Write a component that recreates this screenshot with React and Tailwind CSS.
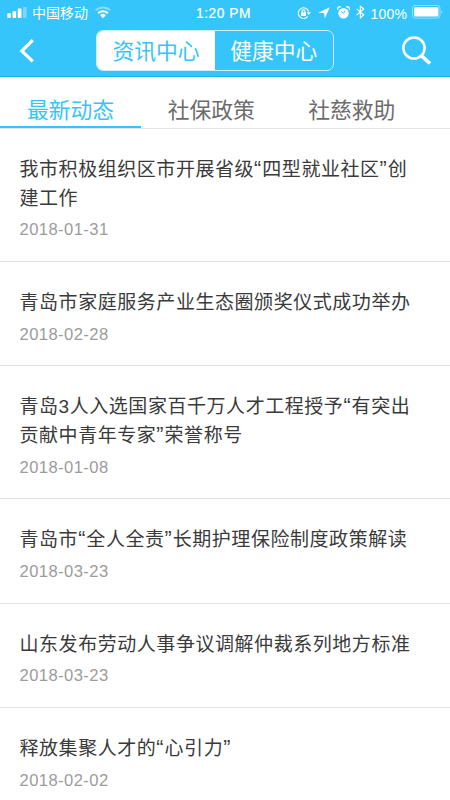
const articles = [
  { lines: ['我市积极组织区市开展省级“四型就业社区”创', '建工作'], date: '2018-01-31', height: 'h-[133px]' },
  { lines: ['青岛市家庭服务产业生态圈颁奖仪式成功举办'], date: '2018-02-28', height: 'h-[104.4px]' },
  { lines: ['青岛3人入选国家百千万人才工程授予“有突出', '贡献中青年专家”荣誉称号'], date: '2018-01-08', height: 'h-[133px]' },
  { lines: ['青岛市“全人全责”长期护理保险制度政策解读'], date: '2018-03-23', height: 'h-[104.4px]' },
  { lines: ['山东发布劳动人事争议调解仲裁系列地方标准'], date: '2018-03-23', height: 'h-[104.4px]' },
  { lines: ['释放集聚人才的“心引力”'], date: '2018-02-02', height: 'h-[104.4px]' },
];

function StatusBar() {
  return (
    <div className="flex h-[26px] items-center text-white">
      <svg className="ml-[7px] h-[12px] w-[20px] shrink-0" viewBox="0 0 20 12" fill="currentColor">
        <rect x="0.3" y="6.2" width="3.6" height="4.8" rx="0.8" />
        <rect x="5.5" y="4.2" width="3.6" height="6.8" rx="0.8" />
        <rect x="10.7" y="1.6" width="3.8" height="9.4" rx="0.8" />
        <rect x="16" y="0" width="3.6" height="11" rx="0.8" opacity="0.35" />
      </svg>
      <span className="ml-[5px] w-[57px] text-[14px] leading-[26px] whitespace-nowrap">中国移动</span>
      <svg className="ml-[6px] -mt-px h-[13px] w-[16px] shrink-0" viewBox="0 0 16 13" fill="none" stroke="currentColor">
        <path d="M0.7 4.4A10.4 10.4 0 0 1 15.3 4.4" strokeWidth="2" opacity="0.4" />
        <path d="M3.1 7.2A7 7 0 0 1 12.9 7.2" strokeWidth="2" />
        <path d="M5.1 9.2A4.1 4.1 0 0 1 10.9 9.2L8 12.2Z" fill="currentColor" stroke="none" />
      </svg>
      <span className="mt-[2px] ml-[85px] w-[56px] text-[13.8px] leading-[24px] tracking-[0.5px] whitespace-nowrap [-webkit-text-stroke:0.2px]">1:20 PM</span>
      <svg className="ml-[44.5px] -mt-px h-[12px] w-[14px] shrink-0" viewBox="0 0 14 12" fill="none" stroke="currentColor" strokeWidth="1.1">
        <path d="M11.7 4.6A5.3 5.3 0 1 0 10.8 9.4" />
        <path d="M9.7 5.2H13.8L11.8 7.9Z" fill="currentColor" stroke="none" />
        <rect x="4" y="5.3" width="5" height="3.7" fill="currentColor" stroke="none" />
        <path d="M5 5.4V4.4a1.5 1.5 0 0 1 3 0v1" />
      </svg>
      <svg className="ml-[7px] -mt-px h-[12px] w-[12px] shrink-0" viewBox="0 0 12 12" fill="currentColor">
        <path d="M11.8 0.3L6.8 11.5L6.2 6.2L0.2 5.7Z" />
      </svg>
      <svg className="ml-[7px] -mt-[2px] h-[13px] w-[13px] shrink-0" viewBox="0 0 13 13" fill="currentColor">
        <circle cx="6.5" cy="7.2" r="5.2" />
        <path d="M0.9 3.8A2 2 0 0 1 3.8 1.2M12.1 3.8A2 2 0 0 0 9.2 1.2" fill="none" stroke="currentColor" strokeWidth="1.3" />
        <path d="M4.2 5.4L6.5 7.3L8.2 4.6" fill="none" stroke="#35c5fb" strokeWidth="1" />
      </svg>
      <svg className="ml-[6px] -mt-[2px] h-[14px] w-[9px] shrink-0" viewBox="0 0 9 14" fill="none" stroke="currentColor" strokeWidth="1.2">
        <path d="M0.7 3.9L7.7 9.8L4.4 12.8V1.2L7.7 4.1L0.7 10" />
      </svg>
      <span className="ml-[6px] mt-px w-[37px] text-[14px] leading-[24px] tracking-[0.2px] whitespace-nowrap">100%</span>
      <svg className="ml-[4px] -mt-[2px] h-[14px] w-[32px] shrink-0" viewBox="0 0 32 14">
        <rect x="0.5" y="0.5" width="27.5" height="12.6" rx="2.5" fill="none" stroke="white" opacity="0.45" />
        <rect x="2.2" y="2.2" width="24.2" height="9.2" rx="1" fill="white" />
        <path d="M29.5 4.7q1.8 2.1 0 4.2Z" fill="white" opacity="0.6" />
      </svg>
    </div>
  );
}

function Header() {
  return (
    <header className="h-[77px] border-b border-[#20b4ec] bg-[#35c5fb]">
      <StatusBar />
      <div className="flex h-[50px] items-start">
        <button aria-label="返回" className="mt-[12px] ml-[19px] block h-[26px] w-[16px]">
          <svg className="h-[26px] w-[16px]" viewBox="0 0 16 26" fill="none" stroke="white" strokeWidth="3.2">
            <path d="M13.8 2.2L2.8 13L13.8 23.4" />
          </svg>
        </button>
        <div className="mt-[4px] ml-[61px] flex h-[41px] w-[237.5px] overflow-hidden rounded-[7px] border-[1.5px] border-[#c9effe] text-[21.8px] leading-[42px]">
          <div className="w-[118px] bg-white text-center text-[#35c5fb]">资讯中心</div>
          <div className="flex-1 text-center text-white">健康中心</div>
        </div>
        <button aria-label="搜索" className="mt-[9px] ml-[67px] block h-[31px] w-[31px]">
          <svg className="h-[31px] w-[31px]" viewBox="0 0 31 31" fill="none" stroke="white">
            <circle cx="13" cy="13" r="10.6" strokeWidth="2.5" />
            <path d="M20 20.3L29 28.5" strokeWidth="3.6" />
          </svg>
        </button>
      </div>
    </header>
  );
}

function Tabs() {
  return (
    <nav className="flex h-[52px] border-b border-[#e4e4e4] bg-white text-[21.8px] leading-[68px] text-[#6c6c6c]">
      <div className="h-[51px] w-[141px] border-b-[2.5px] border-[#35c5fb] text-center text-[#35c5fb]">最新动态</div>
      <div className="w-[140.5px] text-center">社保政策</div>
      <div className="w-[140.5px] text-center">社慈救助</div>
    </nav>
  );
}

function TitleLine({ text }) {
  return (
    <span className="block h-[28.6px]">
      {text.split(/([“”])/).map((part, i) =>
        part === '“' || part === '”' ? (
          <span key={i} className="text-[21.5px] leading-none tracking-[1px]">{part}</span>
        ) : (
          part
        ),
      )}
    </span>
  );
}

export default function App() {
  return (
    <div className="h-[800px] w-[450px] overflow-hidden bg-white font-['Liberation_Sans','Noto_Sans_CJK_SC',sans-serif]">
      <Header />
      <Tabs />
      <main>
        {articles.map((a) => (
          <article key={a.lines[0]} className={`${a.height} border-b border-[#e2e2e2] pt-[27px] pl-[19.5px]`}>
            <h2 className="text-[19px] leading-[28.6px] tracking-[0.55px] whitespace-nowrap text-[#3a3a3a]">
              {a.lines.map((line) => (
                <TitleLine key={line} text={line} />
              ))}
            </h2>
            <p className="mt-[6px] text-[16.6px] leading-[22px] tracking-[0.42px] text-[#9c9c9c]">{a.date}</p>
          </article>
        ))}
      </main>
    </div>
  );
}
